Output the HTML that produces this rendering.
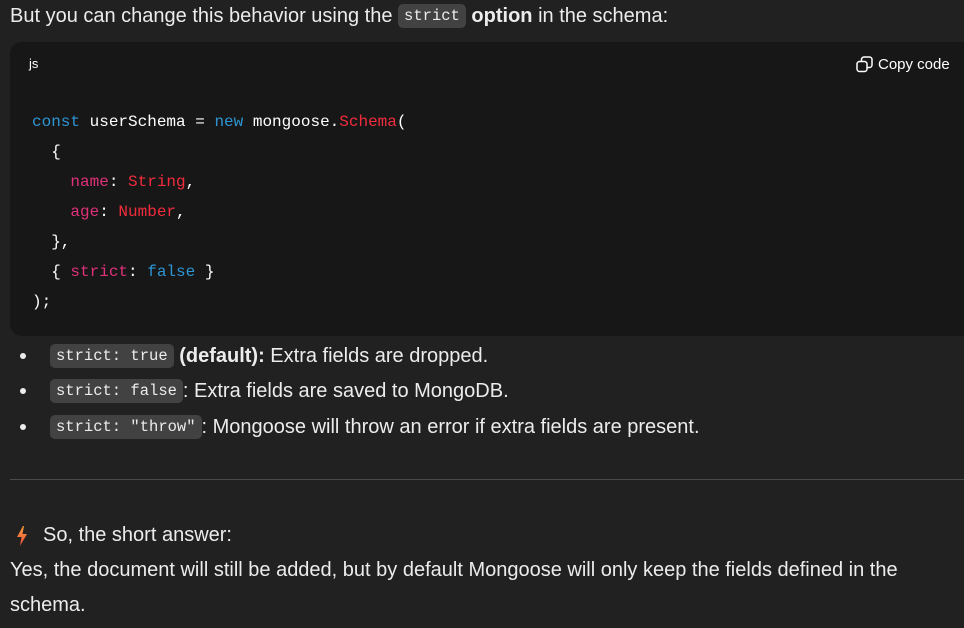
<!DOCTYPE html>
<html><head><style>
body{margin:0;background:#212121;width:964px;height:628px;overflow:hidden;font-family:"Liberation Sans",sans-serif;color:#ececec;font-size:20px;position:relative}
.a{position:absolute;white-space:nowrap}
code{font-family:"Liberation Mono",monospace;font-size:15.5px;background:#424242;border-radius:5px;padding:3px 6px;color:#ececec;vertical-align:2px}
.blk{position:absolute;left:10px;top:42px;width:970px;height:294px;background:#171717;border-radius:12px}
.cl{position:absolute;left:32px;font-family:"Liberation Mono",monospace;font-size:16px;white-space:pre;color:#fff;line-height:30px}
.k{color:#2e95d3}.r{color:#f22c3d}.p{color:#df3079}
.dot{position:absolute;left:20px;width:6px;height:6px;border-radius:50%;background:#ececec}
</style></head><body>
<div class="a" style="left:10px;top:5px">But you can change this behavior using the <code>strict</code> <b>option</b> in the schema:</div>
<div class="blk"></div>
<div class="a" style="left:29px;top:56px;font-size:13px;color:#fff">js</div>
<div class="a" style="left:856px;top:56px;font-size:15px;color:#fff;display:flex;align-items:center;gap:5px">
<svg width="17" height="17" viewBox="0 0 17 17" fill="none" stroke="#fff" stroke-width="1.5"><rect x="1" y="5.5" width="10" height="10" rx="2.5"/><path d="M5.5 5.5V3.5A2.5 2.5 0 0 1 8 1h5.5A2.5 2.5 0 0 1 16 3.5V9a2.5 2.5 0 0 1-2.5 2.5H11"/></svg>Copy code</div>
<div class="cl" style="top:107px"><span class="k">const</span> userSchema = <span class="k">new</span> mongoose.<span class="r">Schema</span>(
  {
    <span class="p">name</span>: <span class="r">String</span>,
    <span class="p">age</span>: <span class="r">Number</span>,
  },
  { <span class="p">strict</span>: <span class="k">false</span> }
);</div>
<div class="dot" style="top:353px"></div>
<div class="dot" style="top:388px"></div>
<div class="dot" style="top:424px"></div>
<div class="a" style="left:50px;top:345px"><code>strict: true</code> <b>(default):</b> Extra fields are dropped.</div>
<div class="a" style="left:50px;top:380px"><code>strict: false</code>: Extra fields are saved to MongoDB.</div>
<div class="a" style="left:50px;top:416px"><code>strict: "throw"</code>: Mongoose will throw an error if extra fields are present.</div>
<div style="position:absolute;left:10px;top:479px;width:954px;height:1px;background:#4a4a4a"></div>
<svg class="a" style="left:16px;top:526px" width="12" height="20" viewBox="0 0 12 20"><defs><linearGradient id="g" x1="0" y1="0" x2="0" y2="1"><stop offset="0" stop-color="#f9a03a"/><stop offset="1" stop-color="#ee4a3c"/></linearGradient></defs><path d="M7 0L1 11h4.5L4 20l7-12H6.5L8 0z" fill="url(#g)"/></svg>
<div class="a" style="left:43px;top:524px">So, the short answer:</div>
<div class="a" style="left:10px;top:559px">Yes, the document will still be added, but by default Mongoose will only keep the fields defined in the</div>
<div class="a" style="left:10px;top:594px">schema.</div>
</body></html>
